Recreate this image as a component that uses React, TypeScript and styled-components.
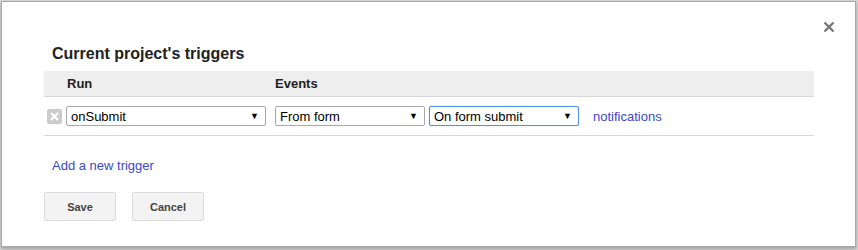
import React from "react";
import styled, { createGlobalStyle } from "styled-components";

const Global = createGlobalStyle`
  html, body { margin: 0; padding: 0; }
  body {
    background: #d6d6d6;
    font-family: "Liberation Sans", Arial, sans-serif;
    width: 858px;
    height: 250px;
    overflow: hidden;
  }
`;

const Frame = styled.div`
  padding: 1px 2px 3px 1px;
  width: 858px;
  height: 250px;
  box-sizing: border-box;
`;

const Dialog = styled.div`
  position: relative;
  box-sizing: border-box;
  height: 246px;
  background: #fff;
  border: 1px solid #a9a9a9;
  box-shadow: 0 2px 3px rgba(0, 0, 0, 0.25);
  padding: 42px 0 0 42px;
`;

const Close = styled.button`
  position: absolute;
  top: 18px;
  right: 19px;
  width: 14px;
  height: 14px;
  padding: 0;
  border: 0;
  background: none;
  cursor: pointer;
  display: flex;
  align-items: center;
  justify-content: center;
`;

const Title = styled.h2`
  margin: 0 0 7px 8px;
  font-size: 16px;
  line-height: 20px;
  font-weight: bold;
  color: #222;
`;

const Table = styled.div`
  width: 770px;
`;

const HeaderRow = styled.div`
  display: flex;
  align-items: center;
  height: 25px;
  background: #eeeeee;
  border-bottom: 1px solid #d6d6d6;
`;

const HeaderCell = styled.div<{ $w?: number; $pl?: number }>`
  width: ${(p) => (p.$w ? `${p.$w}px` : "auto")};
  padding-left: ${(p) => p.$pl ?? 0}px;
  box-sizing: border-box;
  font-size: 13px;
  font-weight: bold;
  color: #222;
`;

const DataRow = styled.div`
  display: flex;
  align-items: center;
  height: 38px;
  padding-left: 3px;
  border-bottom: 1px solid #d6d6d6;
`;

const DeleteIcon = styled.span`
  width: 15px;
  height: 15px;
  border-radius: 2px;
  background: #cccccc;
  display: flex;
  align-items: center;
  justify-content: center;
  margin-right: 4px;
  flex: none;
`;

const Select = styled.div<{ $w: number; $focus?: boolean; $mr: number }>`
  box-sizing: border-box;
  width: ${(p) => p.$w}px;
  height: 20px;
  margin-right: ${(p) => p.$mr}px;
  border: 1px solid ${(p) => (p.$focus ? "#4d90fe" : "#a9a9a9")};
  border-radius: 2px;
  box-shadow: ${(p) => (p.$focus ? "0 0 1px rgba(77,144,254,0.6)" : "none")};
  display: flex;
  align-items: center;
  justify-content: space-between;
  padding: 0 6px 0 4px;
  font-size: 13px;
  color: #000;
  background: #fff;
  flex: none;
`;

const Arrow = styled.span`
  font-size: 9px;
  line-height: 1;
  color: #000;
`;

const Link = styled.a`
  color: #3b48cc;
  font-size: 13px;
  text-decoration: none;
  cursor: pointer;
`;

const AddLink = styled(Link)`
  display: inline-block;
  margin: 22px 0 0 8px;
  line-height: 16px;
`;

const Buttons = styled.div`
  display: flex;
  gap: 16px;
  margin-top: 18px;
`;

const Button = styled.button`
  box-sizing: border-box;
  width: 72px;
  height: 29px;
  border: 1px solid #dcdcdc;
  border-radius: 2px;
  background: #f3f3f3;
  font-family: "Liberation Sans", Arial, sans-serif;
  font-size: 11px;
  font-weight: bold;
  color: #444;
  cursor: pointer;
`;

const Block = styled.div``;

export default function App() {
  return (
    <>
      <Global />
      <Frame>
        <Dialog>
          <Close aria-label="Close">
            <svg width="12" height="12" viewBox="0 0 12 12">
              <path d="M1.5 1.5 L10.5 10.5 M10.5 1.5 L1.5 10.5" stroke="#777" strokeWidth="2.4" />
            </svg>
          </Close>
          <Title>Current project's triggers</Title>
          <Table>
            <HeaderRow>
              <HeaderCell $w={231} $pl={23}>Run</HeaderCell>
              <HeaderCell>Events</HeaderCell>
            </HeaderRow>
            <DataRow>
              <DeleteIcon>
                <svg width="9" height="9" viewBox="0 0 9 9">
                  <path d="M1 1 L8 8 M8 1 L1 8" stroke="#fff" strokeWidth="2.2" />
                </svg>
              </DeleteIcon>
              <Select $w={200} $mr={9}>
                <span>onSubmit</span>
                <Arrow>▼</Arrow>
              </Select>
              <Select $w={150} $mr={4}>
                <span>From form</span>
                <Arrow>▼</Arrow>
              </Select>
              <Select $w={150} $mr={14} $focus>
                <span>On form submit</span>
                <Arrow>▼</Arrow>
              </Select>
              <Link>notifications</Link>
            </DataRow>
          </Table>
          <Block>
            <AddLink>Add a new trigger</AddLink>
          </Block>
          <Buttons>
            <Button>Save</Button>
            <Button>Cancel</Button>
          </Buttons>
        </Dialog>
      </Frame>
    </>
  );
}
